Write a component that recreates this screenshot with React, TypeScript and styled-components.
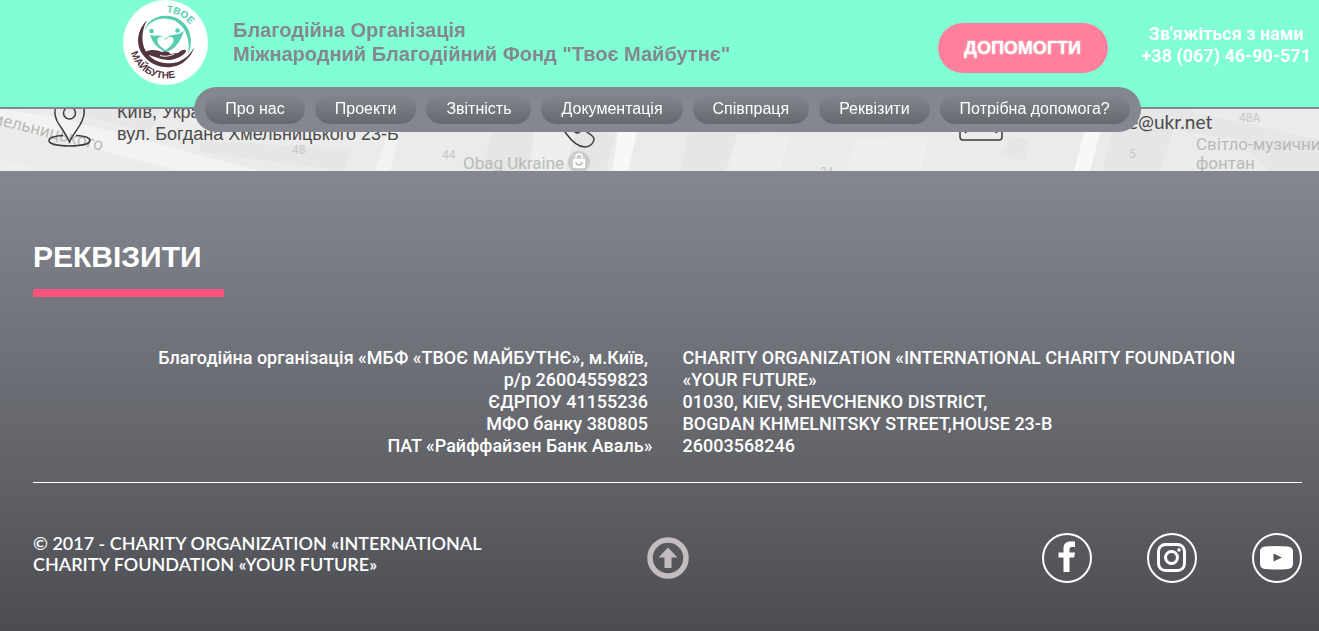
import React from "react";
import styled, { createGlobalStyle } from "styled-components";

const sans = '"Liberation Sans", Arial, sans-serif';
const roboto = 'Roboto, "Liberation Sans", sans-serif';
const lato = 'Lato, "Liberation Sans", sans-serif';

const GlobalStyle = createGlobalStyle`
  * { box-sizing: border-box; }
  html, body { margin: 0; padding: 0; }
  body { background: #4b4d51; font-family: ${roboto}; overflow-x: hidden; }
  a { color: inherit; text-decoration: none; }
  p, h1, h2 { margin: 0; }
`;

const Header = styled.header`
  position: fixed;
  top: 0;
  left: 0;
  right: 0;
  z-index: 10;
  height: 109px;
  background: #80ffd4;
  border-bottom: 2px solid #84878f;
`;

const HeaderRow = styled.div`
  display: flex;
  align-items: flex-start;
  height: 87px;
  padding: 0 8px 0 123px;
`;

const LogoLink = styled.a`
  display: block;
  width: 85px;
  height: 85px;
`;

const OrgName = styled.h1`
  margin: 18px auto 0 25px;
  font: bold 20px/24px ${sans};
  color: #84878f;
  white-space: nowrap;
`;

const HelpButton = styled.button`
  width: 170px;
  height: 50px;
  margin: 23px 34px 0 0;
  border: 0;
  border-radius: 25px;
  background: #ff7f9c;
  color: #fff;
  font: bold 18px/20px ${sans};
  text-shadow: 0 0 2px #fff;
  cursor: pointer;
`;

const Phone = styled.a`
  margin-top: 23px;
  font: bold 18px/22px ${roboto};
  color: #fff;
  text-align: center;
  white-space: nowrap;
`;

const NavWrap = styled.div`
  display: flex;
  justify-content: center;
  padding: 0 0 0 16px;
`;

const Nav = styled.nav`
  display: flex;
  gap: 10px;
  height: 45px;
  padding: 7px 11px 8px;
  border-radius: 23px;
  background: #84878f;
`;

const NavLink = styled.a`
  height: 30px;
  padding: 0 20px;
  border-radius: 15px;
  background: linear-gradient(#84878f, #65686d);
  color: #fff;
  font: 400 16px/30px ${sans};
  white-space: nowrap;
`;

const Contacts = styled.section`
  position: relative;
  height: 171px;
  overflow: hidden;
  background: #ebebeb;
`;

const MapArt = styled.svg`
  position: absolute;
  inset: 0;
  width: 100%;
  height: 100%;
`;

const ContactRow = styled.div`
  position: relative;
  display: grid;
  grid-template-columns: 507fr 404fr 360fr;
  padding: 101px 0 0 48px;
  color: #4a4a4a;
  font: 400 18px/22px ${sans};
`;

const ContactItem = styled.address`
  display: flex;
  gap: 25px;
  font-style: normal;
  white-space: nowrap;
`;

const MailItem = styled(ContactItem)`
  padding-top: 11px;
  gap: 46px;
  font: 400 19px/20px ${lato};
`;

const Details = styled.section`
  padding: 68px 17px 0 33px;
  background: linear-gradient(#84878f, #6f7179 58%, #5f6165);
`;

const DetailsTitle = styled.h2`
  font: bold 30px/36px ${sans};
  color: #fff;
`;

const Accent = styled.div`
  width: 191px;
  height: 8px;
  margin-top: 14px;
  background: #ff5480;
`;

const Columns = styled.div`
  display: grid;
  grid-template-columns: 1fr 1fr;
  gap: 30px;
  padding: 50px 0 25px;
  border-bottom: 1px solid #fff;
  font: 500 18px/22px ${roboto};
  color: #fff;
`;

const RightText = styled.p`
  text-align: right;
`;

const Footer = styled.footer`
  display: grid;
  grid-template-columns: 1fr auto 1fr;
  align-items: center;
  height: 148px;
  padding: 2px 17px 0 33px;
  background: linear-gradient(#5f6166, #4b4d52);
  color: #fff;
`;

const Copyright = styled.p`
  margin-bottom: 8px;
  font: 600 18px/21px ${lato};
`;

const TopLink = styled.a`
  display: block;
  width: 42px;
  height: 42px;
`;

const Socials = styled.div`
  display: flex;
  justify-content: flex-end;
  gap: 55px;
`;

const Social = styled.a`
  display: grid;
  place-items: center;
  width: 50px;
  height: 50px;
  border: 2px solid #fff;
  border-radius: 50%;
`;

const navItems = ["Про нас", "Проекти", "Звітність", "Документація", "Співпраця", "Реквізити", "Потрібна допомога?"];

const Logo = () => (
  <svg viewBox="0 0 85 85" width="85" height="85" role="img" aria-label="Твоє Майбутнє">
    <defs>
      <path id="arcTop" d="M43.500 12.500 A30 30 0 0 1 73 42" />
      <path id="arcBottom" d="M8 53 A36.500 36.500 0 0 0 72 64" />
    </defs>
    <circle cx="42.5" cy="42.5" r="42.5" fill="#fff" />
    <path d="M21 31 C25 18 38 13 51 17 C66 22 72 39 65 55 C68 39 62 25 50 20 C39 16 27 20 21 31Z" fill="#55cdb0" />
    <path d="M24 20 C14 30 12 45 20 55 C30 69 51 71 62 61 C67 57 70 52 71 47 C66 58 55 65 42 63 C23 61 13 42 24 20Z" fill="#54353f" />
    <circle cx="28.500" cy="31" r="2.300" fill="#55cdb0" />
    <circle cx="54.500" cy="30.500" r="2.300" fill="#55cdb0" />
    <path d="M27 35 C33 37 37 33 42 39 C47 33 53 37 61 31 C58 38 56 46 46 51 L42 52 C33 47 30 43 27 35Z" fill="#55cdb0" />
    <path d="M42.500 50 C31 43 34 36.500 38.500 37 C41 37 42 39 42.500 40 C43 39 44.500 37 47 37 C52 37 53 43 42.500 50Z" fill="#fff" />
    <path d="M22 52 C28 49 34 50 39 52 C44 51 47 52 47 54 L55 53 C59 49 63 49 63 51 C62 55 54 59 47 60 C41 60 37 59 32 57 C28 55 24 56 22 52Z" fill="#54353f" />
    <path d="M37 55.500 C42 57 47 56 51 54" fill="none" stroke="#fff" strokeWidth="1" />
    <text fontFamily="Liberation Sans" fontWeight="700" fontSize="10" fill="#55cdb0">
      <textPath href="#arcTop">ТВОЕ</textPath>
    </text>
    <text fontFamily="Liberation Sans" fontWeight="700" fontSize="10" fill="#54353f">
      <textPath href="#arcBottom">МАЙБУТНЕ</textPath>
    </text>
  </svg>
);

const CityMap = () => (
  <MapArt viewBox="0 0 1319 171" preserveAspectRatio="xMidYMax slice" aria-hidden="true">
    <rect width="1319" height="171" fill="#ebebeb" />
    <g fill="#e6e6e6">
      <path d="M500 109H620L606 171H480Z" />
      <path d="M694 109H770L738 171H680Z" />
      <path d="M1118 109H1180L1160 171H1102Z" />
      <path d="M60 109H160L150 132L90 118Z" />
      <path d="M1010 138L1030 139L1024 160L1000 155Z" />
      <path d="M200 140L350 150L345 171L200 152Z" />
      <path d="M1180 109L1319 140V171H1270L1240 140L1170 130Z" />
    </g>
    <g fill="#efefef">
      <path d="M738 134L790 136L780 171H726Z" />
      <path d="M858 138L930 136L920 171H845Z" />
      <path d="M535 130L575 134L565 171H528Z" />
      <path d="M0 160L30 165V171H0Z" />
    </g>
    <path d="M0 109L60 118L260 171H180L0 124Z" fill="#f3f3f3" />
    <path d="M622 109H642L628 171H612Z" fill="#f8f8f8" />
    <path d="M1090 109H1106L1090 171H1074Z" fill="#f8f8f8" />
    <path d="M388 132H400L390 171H375Z" fill="#f3f3f3" />
    <g fill="#b9b9b9" fontFamily="Roboto" fontSize="17">
      <text transform="translate(-10 123) rotate(14)">мельницького</text>
      <text x="463" y="169">Obag Ukraine</text>
      <text x="1196" y="150">Світло-музичний</text>
      <text x="1196" y="169">фонтан</text>
    </g>
    <g fill="#c8c8c8" fontFamily="Roboto" fontSize="12">
      <text x="292" y="154">48</text>
      <text x="442" y="159">44</text>
      <text x="1129" y="158">5</text>
      <text x="1239" y="122">48A</text>
      <text x="820" y="176">34</text>
    </g>
    <circle cx="579" cy="162" r="11" fill="#cccccc" />
    <path d="M573 159H585V168H573Z" fill="#fff" />
    <path d="M576 159V157A3 3 0 0 1 582 157V159" fill="none" stroke="#fff" strokeWidth="1.500" />
    <path d="M576 162A3 3 0 0 0 582 162" fill="none" stroke="#bbb" strokeWidth="1.500" />
  </MapArt>
);

const PinIcon = () => (
  <svg width="44" height="48" viewBox="0 0 44 48" fill="none" stroke="#3c3c3c" strokeWidth="1.500">
    <path d="M21.500 41C18 33 13 27 9 20C3 7 11-3 22-3S40 7 34 20C31 27 25 33 21.500 41Z" />
    <circle cx="21.500" cy="12" r="6" />
    <path d="M15 34.500C6 35 1 37 1 39.500C1 43 10 45 21.500 45S42 43 42 39.500C42 37 37 35 28 34.500" />
  </svg>
);

const PhoneIcon = () => (
  <svg width="40" height="48" viewBox="0 0 40 48" fill="none" stroke="#3c3c3c" strokeWidth="1.500">
    <path d="M2 8C2 24 18 46 30 46C35 46 39 42 39 38C39 35 35 33 29 29C26 28 25 32 22 32C18 31 13 24 12 20L14 15L8 4Z" />
  </svg>
);

const MailIcon = () => (
  <svg width="44" height="29" viewBox="0 0 44 29" fill="none" stroke="#3c3c3c" strokeWidth="1.500">
    <rect x="1" y="1" width="42" height="27" rx="3" />
    <path d="M3 3L22 17L41 3M6 21L16 13M38 21L28 13" />
  </svg>
);

export default function App() {
  return (
    <>
      <GlobalStyle />
      <Header>
        <HeaderRow>
          <LogoLink href="#"><Logo /></LogoLink>
          <OrgName>Благодійна Організація<br />Міжнародний Благодійний Фонд "Твоє Майбутнє"</OrgName>
          <HelpButton type="button">ДОПОМОГТИ</HelpButton>
          <Phone href="tel:+380674690571">Зв'яжіться з нами<br />+38 (067) 46-90-571</Phone>
        </HeaderRow>
        <NavWrap>
          <Nav>
            {navItems.map((item) => <NavLink href="#" key={item}>{item}</NavLink>)}
          </Nav>
        </NavWrap>
      </Header>
      <main>
        <Contacts>
          <CityMap />
          <ContactRow>
            <ContactItem>
              <PinIcon />
              <span>Київ, Україна<br />вул. Богдана Хмельницького 23-Б</span>
            </ContactItem>
            <ContactItem><PhoneIcon /></ContactItem>
            <MailItem><MailIcon /><a href="mailto:yourfuture@ukr.net">yourfuture@ukr.net</a></MailItem>
          </ContactRow>
        </Contacts>
        <Details>
          <DetailsTitle>РЕКВІЗИТИ</DetailsTitle>
          <Accent />
          <Columns>
            <RightText>
              Благодійна організація «МБФ «ТВОЄ МАЙБУТНЄ», м.Київ,&nbsp;<br />
              р/р 26004559823&nbsp;<br />
              ЄДРПОУ 41155236&nbsp;<br />
              МФО банку 380805&nbsp;<br />
              ПАТ «Райффайзен Банк Аваль»
            </RightText>
            <p>
              CHARITY ORGANIZATION «INTERNATIONAL CHARITY FOUNDATION<br />
              «YOUR FUTURE»<br />
              01030, KIEV, SHEVCHENKO DISTRICT,<br />
              BOGDAN KHMELNITSKY STREET,HOUSE 23-B<br />
              26003568246
            </p>
          </Columns>
        </Details>
      </main>
      <Footer>
        <Copyright>© 2017 - CHARITY ORGANIZATION «INTERNATIONAL<br />CHARITY FOUNDATION «YOUR FUTURE»</Copyright>
        <TopLink href="#" aria-label="Нагору">
          <svg width="42" height="42" viewBox="0 0 42 42">
            <circle cx="21" cy="21" r="18" fill="none" stroke="#c5bcc0" strokeWidth="5.500" />
            <path d="M21 10.500L30.500 20.500H24.500V31H17.500V20.500H11.500Z" fill="#c5bcc0" />
          </svg>
        </TopLink>
        <Socials>
          <Social href="#" aria-label="Facebook">
            <svg width="46" height="46" viewBox="0 0 46 46">
              <path d="M19.500 37V22.500H14.500V17.500H19.500V13.500C19.500 9 22 6.500 26.500 6.500H31V12H28C26.300 12 25.500 12.800 25.500 14.500V17.500H31L30.200 22.500H25.500V37Z" fill="#fff" />
            </svg>
          </Social>
          <Social href="#" aria-label="Instagram">
            <svg width="46" height="46" viewBox="0 0 46 46" fill="none" stroke="#fff">
              <rect x="9.500" y="9.500" width="26" height="26" rx="7" strokeWidth="3" />
              <circle cx="22.500" cy="22.500" r="6" strokeWidth="3" />
              <circle cx="30" cy="15" r="1.800" fill="#fff" stroke="none" />
            </svg>
          </Social>
          <Social href="#" aria-label="YouTube">
            <svg width="46" height="46" viewBox="0 0 46 46">
              <path fillRule="evenodd" d="M11 11.500Q23 10.500 34 11.500Q38.500 12 39 16V29.500Q38.500 33.500 34 34Q23 35 11 34Q6.500 33.500 6 29.500V16Q6.500 12 11 11.500ZM19.500 18.500V26.500L28 22.500Z" fill="#fff" />
            </svg>
          </Social>
        </Socials>
      </Footer>
    </>
  );
}
